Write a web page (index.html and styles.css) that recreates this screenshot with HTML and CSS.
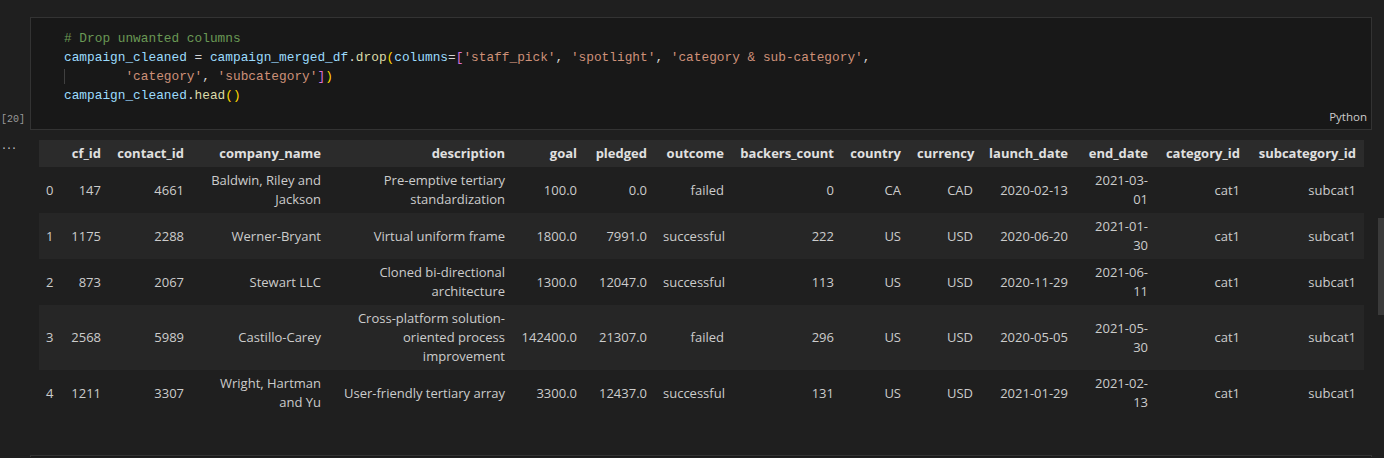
FILE: index.html
```html
<!DOCTYPE html>
<html>
<head>
<meta charset="utf-8">
<link rel="stylesheet" href="styles.css">
</head>
<body>
<div class="notebook">
  <div class="cell-row">
    <div class="gutter"><span class="exec-count">[20]</span></div>
    <div class="code-cell">
      <pre class="code"><span class="c"># Drop unwanted columns</span>
<span class="v">campaign_cleaned</span><span class="p"> = </span><span class="v">campaign_merged_df</span><span class="p">.</span><span class="f">drop</span><span class="b1">(</span><span class="v">columns</span><span class="p">=</span><span class="b2">[</span><span class="s">'staff_pick'</span><span class="p">, </span><span class="s">'spotlight'</span><span class="p">, </span><span class="s">'category &amp; sub-category'</span><span class="p">,</span>
<span class="guide">    </span>    <span class="s">'category'</span><span class="p">, </span><span class="s">'subcategory'</span><span class="b2">]</span><span class="b1">)</span>
<span class="v">campaign_cleaned</span><span class="p">.</span><span class="f">head</span><span class="b1">()</span></pre>
      <div class="lang">Python</div>
    </div>
  </div>

  <div class="output-row">
    <div class="out-gutter">...</div>
    <table class="df">
      <colgroup>
        <col style="width:24px"><col style="width:46px"><col style="width:83px"><col style="width:137px"><col style="width:184px"><col style="width:72px"><col style="width:70px"><col style="width:77px"><col style="width:110px"><col style="width:67px"><col style="width:72px"><col style="width:95px"><col style="width:80px"><col style="width:92px"><col style="width:116px">
      </colgroup>
      <thead>
        <tr><th></th><th>cf_id</th><th>contact_id</th><th>company_name</th><th>description</th><th>goal</th><th>pledged</th><th>outcome</th><th>backers_count</th><th>country</th><th>currency</th><th>launch_date</th><th>end_date</th><th>category_id</th><th>subcategory_id</th></tr>
      </thead>
      <tbody>
        <tr><td class="idx">0</td><td>147</td><td>4661</td><td>Baldwin, Riley and Jackson</td><td>Pre-emptive tertiary standardization</td><td>100.0</td><td>0.0</td><td>failed</td><td>0</td><td>CA</td><td>CAD</td><td>2020-02-13</td><td>2021-03-01</td><td>cat1</td><td>subcat1</td></tr>
        <tr><td class="idx">1</td><td>1175</td><td>2288</td><td>Werner-Bryant</td><td>Virtual uniform frame</td><td>1800.0</td><td>7991.0</td><td>successful</td><td>222</td><td>US</td><td>USD</td><td>2020-06-20</td><td>2021-01-30</td><td>cat1</td><td>subcat1</td></tr>
        <tr><td class="idx">2</td><td>873</td><td>2067</td><td>Stewart LLC</td><td>Cloned bi-directional architecture</td><td>1300.0</td><td>12047.0</td><td>successful</td><td>113</td><td>US</td><td>USD</td><td>2020-11-29</td><td>2021-06-11</td><td>cat1</td><td>subcat1</td></tr>
        <tr><td class="idx">3</td><td>2568</td><td>5989</td><td>Castillo-Carey</td><td>Cross-platform solution-oriented process improvement</td><td>142400.0</td><td>21307.0</td><td>failed</td><td>296</td><td>US</td><td>USD</td><td>2020-05-05</td><td>2021-05-30</td><td>cat1</td><td>subcat1</td></tr>
        <tr><td class="idx">4</td><td>1211</td><td>3307</td><td>Wright, Hartman and Yu</td><td>User-friendly tertiary array</td><td>3300.0</td><td>12437.0</td><td>successful</td><td>131</td><td>US</td><td>USD</td><td>2021-01-29</td><td>2021-02-13</td><td>cat1</td><td>subcat1</td></tr>
      </tbody>
    </table>
  </div>

  <div class="next-cell"></div>
</div>
<div class="scrollbar"></div>
</body>
</html>
```

FILE: styles.css
```css
html, body {
  margin: 0;
  padding: 0;
  background: #1f1f1f;
  height: 100%;
  overflow: hidden;
}
.notebook {
  padding-top: 17px;
  font-family: "Open Sans", "Liberation Sans", sans-serif;
  color: #cccccc;
}
.cell-row {
  display: flex;
  align-items: stretch;
}
.gutter {
  width: 30px;
  flex: none;
  display: flex;
  align-items: flex-end;
}
.exec-count {
  font-family: "Liberation Mono", monospace;
  font-size: 10px;
  color: #9a9a9a;
  padding: 0 0 5px 1px;
}
.code-cell {
  width: 1340px;
  border: 1px solid #333333;
  background: #181818;
  display: flex;
  flex-direction: column;
}
.code {
  margin: 0;
  padding: 11px 0 0 33px;
  font-family: "Liberation Mono", monospace;
  font-size: 12.8px;
  line-height: 19px;
  color: #d4d4d4;
  white-space: pre;
}
.c { color: #6a9955; }
.v { color: #9cdcfe; }
.p { color: #d4d4d4; }
.f { color: #dcdcaa; }
.s { color: #ce9178; }
.b1 { color: #ffd700; }
.b2 { color: #da70d6; }
.guide { box-shadow: inset 1px 0 0 #404040; }
.lang {
  text-align: right;
  font-size: 11.5px;
  line-height: 16px;
  color: #cccccc;
  padding: 4px 4px 4px 0;
}
.output-row {
  display: flex;
  margin-top: 10px;
}
.out-gutter {
  width: 38px;
  flex: none;
  font-family: "Liberation Mono", monospace;
  font-size: 10px;
  line-height: 14px;
  color: #cccccc;
  padding-left: 1px;
  letter-spacing: -1px;
}
.df {
  table-layout: fixed;
  width: 1325px;
  border-collapse: collapse;
  border-spacing: 0;
  font-size: 13px;
  line-height: 19px;
}
.df th, .df td {
  padding: 4px 8px;
  text-align: right;
  vertical-align: middle;
}
.df th {
  font-weight: bold;
  color: #e0e0e0;
  background: #2b2b2b;
}
.df td.idx { text-align: left; padding-left: 7px; }
.df tbody tr:nth-child(even) { background: #262626; }
.next-cell {
  margin: 39px 0 0 30px;
  width: 1340px;
  height: 1px;
  border: 1px solid #333333;
  border-bottom: none;
  background: #181818;
}
.scrollbar {
  position: absolute;
  left: 1378px;
  top: 218px;
  width: 6px;
  height: 97px;
  background: #3a3a3a;
}
```
